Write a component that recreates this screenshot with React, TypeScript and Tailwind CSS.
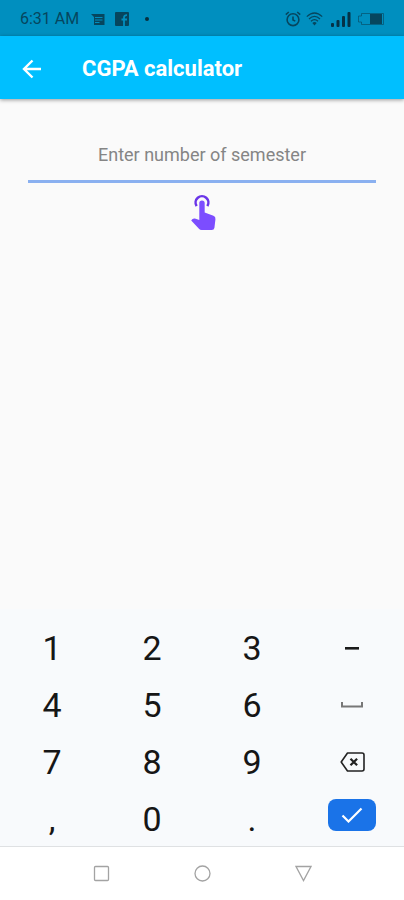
import React, { useState } from 'react';

const StatusBar: React.FC = () => (
  <div className="flex h-9 items-center bg-[#008fbf] px-5 pt-0.5 text-[#06465e]">
    <span className="w-[71px] text-base">6:31 AM</span>

    {/* Message */}
    <svg width="14" height="13" viewBox="0 0 14 13" fill="none" aria-hidden="true">
      <path d="M0 1h13.5v11H3V4z" fill="currentColor" />
      <path d="M4 4.5h7.5M4 7h7.5M4 9.5h4.5" stroke="#008fbf" strokeWidth="1" />
    </svg>

    {/* Facebook */}
    <svg className="ml-[10px]" width="14" height="14" viewBox="0 0 14 14" fill="none" aria-hidden="true">
      <rect width="14" height="14" rx="1" fill="currentColor" />
      <path d="M9 14V5.5Q9 3 12 3.2M6.5 7.5H12" stroke="#008fbf" strokeWidth="1.8" />
    </svg>
    <span className="ml-4 size-1 rounded-full bg-[#06303f]" />

    <div className="ml-auto flex items-center">
      {/* Alarm */}
      <svg width="16" height="16" viewBox="0 0 16 16" fill="none" stroke="currentColor" strokeWidth="1.6" aria-hidden="true">
        <circle cx="8" cy="8.7" r="5.9" />
        <path d="M8 5.5v3.4l2.3 1.2M.8 3.6l3-2.6M15.2 3.6l-3-2.6" />
      </svg>
      {/* Wifi */}
      <svg className="ml-[5px]" width="17" height="14" viewBox="0 0 17 14" fill="none" stroke="currentColor" strokeWidth="1.2" aria-hidden="true">
        <path d="M.8 4.6Q8.5-2.6 16.2 4.6M3 7Q8.5 1.8 14 7M5 9.3Q8.5 6 12 9.3" />
        <path d="M6.3 11Q8.5 8.9 10.7 11L8.5 13.5z" fill="currentColor" stroke="none" />
      </svg>
      {/* Signal */}
      <svg className="ml-2" width="20" height="15" viewBox="0 0 20 15" fill="#043247" aria-hidden="true">
        <rect x="0" y="11" width="3" height="4" rx="1" />
        <rect x="5.5" y="8" width="3" height="7" rx="1" />
        <rect x="11" y="4" width="3" height="11" rx="1" />
        <rect x="16.5" y="0" width="3" height="15" rx="1" />
      </svg>
      {/* Battery */}
      <svg className="ml-[7px]" width="26" height="12" viewBox="0 0 26 12" fill="none" stroke="currentColor" aria-hidden="true">
        <path d="M3.5.5h22v11h-22V9H.5V3h3z" strokeOpacity=".6" />
        <rect x="12" y="1" width="12" height="10" fill="currentColor" stroke="none" />
      </svg>
    </div>
  </div>
);

const TouchIcon: React.FC = () => (
  <svg width="25" height="35" viewBox="0 0 73 104" fill="none" aria-hidden="true">
    <path d="M16 33A19 19 0 1 1 48 33" stroke="#6a35e8" strokeWidth="7.5" />
    <path
      d="M24 24a8 8 0 0 1 16 0v28l26 10q7 3 6 10l-3 25q-1 7-8 7H31q-5 0-8-4L0 76l3-4q4-3 8-2l13 4z"
      fill="#7c4dff"
    />
  </svg>
);

const MinusIcon: React.FC = () => (
  <svg width="14" height="3" viewBox="0 0 14 3" aria-hidden="true">
    <rect width="14" height="2.6" fill="#1a1a1a" />
  </svg>
);

const SpaceIcon: React.FC = () => (
  <svg width="22" height="7" viewBox="0 0 22 7" fill="none" aria-hidden="true">
    <path d="M1 0v4.5h20V0" stroke="#777" strokeWidth="2" />
  </svg>
);

const BackspaceIcon: React.FC = () => (
  <svg width="25" height="20" viewBox="0 0 25 20" fill="none" stroke="#222" strokeWidth="1.6" strokeLinejoin="round" aria-hidden="true">
    <path d="M7.5 1H22q2 0 2 2v14q0 2-2 2H7.5L1.2 10z" />
    <path d="M10.5 6.7l6.6 6.6M17.1 6.7l-6.6 6.6" strokeWidth="2.2" />
  </svg>
);

const keys = [
  { label: '1', value: '1' },
  { label: '2', value: '2' },
  { label: '3', value: '3' },
  { label: 'Minus', value: '-', icon: MinusIcon },
  { label: '4', value: '4' },
  { label: '5', value: '5' },
  { label: '6', value: '6' },
  { label: 'Space', value: ' ', icon: SpaceIcon },
  { label: '7', value: '7' },
  { label: '8', value: '8' },
  { label: '9', value: '9' },
  { label: 'Backspace', value: '', icon: BackspaceIcon },
  { label: ',', value: ',' },
  { label: '0', value: '0' },
  { label: '.', value: '.' },
];

const App: React.FC = () => {
  const [semesters, setSemesters] = useState('');

  const press = (value: string) => {
    // Backspace is the only key without a value
    setSemesters((prev) => (value === '' ? prev.slice(0, -1) : prev + value));
  };

  return (
    <div className="flex min-h-screen flex-col bg-[#fafafa] font-['Roboto',sans-serif]">
      <StatusBar />

      <header className="flex h-[63px] items-center bg-[#00bfff] pl-[22px] pt-0.5 text-white shadow-[0_1px_4px_rgba(0,0,0,0.4)]">
        <button type="button" aria-label="Back" className="w-[60px]">
          <svg width="20" height="20" viewBox="0 0 20 20" fill="none" stroke="currentColor" strokeWidth="2.4" aria-hidden="true">
            <path d="M19 10H3M10.5 1.5L2 10l8.5 8.5" />
          </svg>
        </button>
        <h1 className="text-[22px] font-bold">CGPA calculator</h1>
      </header>

      <main className="flex flex-1 flex-col items-center px-7 pt-7">
        <input
          type="text"
          aria-label="Enter number of semester"
          placeholder="Enter number of semester"
          value={semesters}
          onChange={(e) => setSemesters(e.target.value)}
          className="h-14 w-full border-b-3 border-[#8ab0f0] pt-0.5 text-center text-[18px] text-gray-800 outline-none placeholder:text-[#858585]"
        />
        <div className="pl-0.5 pt-3">
          <TouchIcon />
        </div>
      </main>

      {/* Number pad */}
      <section className="grid grid-cols-4 gap-y-[3px] border-b border-[#dfe1e3] bg-[#f8fafc] px-0.5 pt-3">
        {keys.map(({ label, value, icon: Icon }) => (
          <button
            key={label}
            type="button"
            aria-label={label}
            onClick={() => press(value)}
            className="flex h-[54px] items-center justify-center text-[34px] text-[#161616]"
          >
            {Icon ? <Icon /> : label}
          </button>
        ))}
        <div className="flex justify-center pt-[7px]">
          <button
            type="button"
            aria-label="Done"
            className="flex h-8 w-12 items-center justify-center rounded-lg bg-[#1a73e8]"
          >
            <svg width="22" height="16" viewBox="0 0 22 16" fill="none" stroke="white" strokeWidth="2.2" aria-hidden="true">
              <path d="M1.5 8.5l6 6 13-13" />
            </svg>
          </button>
        </div>
      </section>

      {/* System navigation */}
      <nav className="flex h-[53px] items-center justify-center gap-[84px] bg-white">
        <button type="button" aria-label="Recent apps">
          <svg width="17" height="17" viewBox="0 0 17 17" fill="none" stroke="#a3a3a3" strokeWidth="1.3" aria-hidden="true">
            <rect x="1.5" y="1.5" width="14" height="14" rx="1" />
          </svg>
        </button>
        <button type="button" aria-label="Home">
          <svg width="17" height="17" viewBox="0 0 17 17" fill="none" stroke="#a3a3a3" strokeWidth="1.3" aria-hidden="true">
            <circle cx="8.5" cy="8.5" r="7.5" />
          </svg>
        </button>
        <button type="button" aria-label="Back">
          <svg width="17" height="17" viewBox="0 0 17 17" fill="none" stroke="#a3a3a3" strokeWidth="1.3" aria-hidden="true">
            <path d="M1 1.5h15l-7.5 14z" />
          </svg>
        </button>
      </nav>
    </div>
  );
};

export default App;
